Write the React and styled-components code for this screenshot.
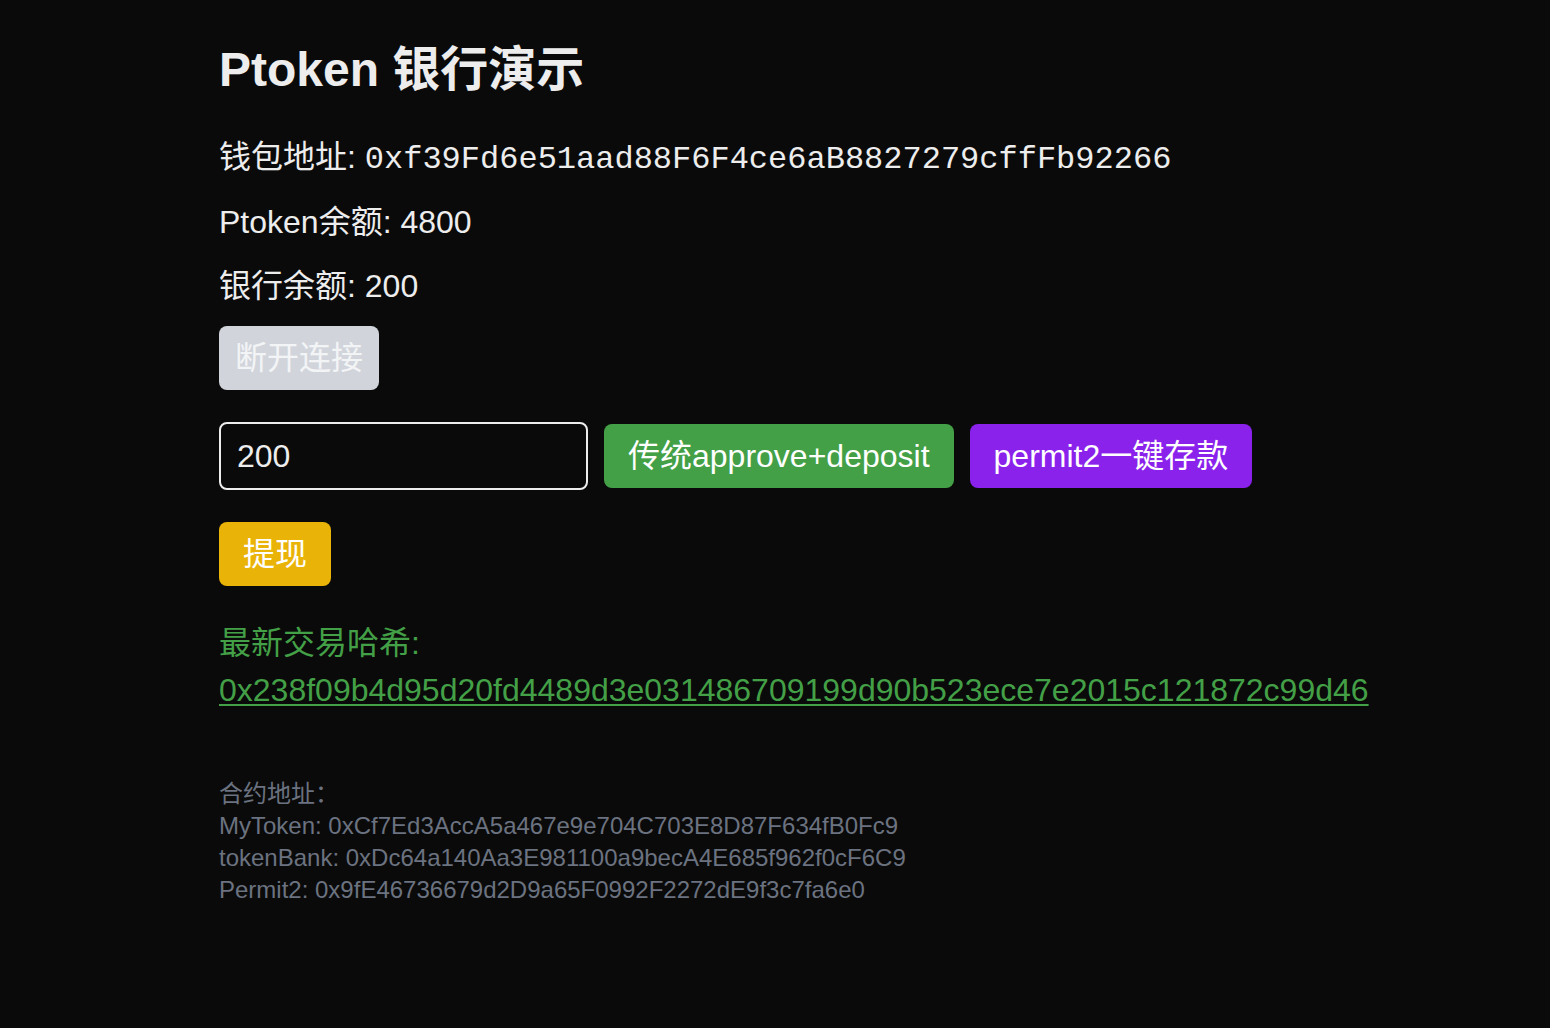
import React, { useState } from 'react';
import styled, { createGlobalStyle } from 'styled-components';

const GlobalStyle = createGlobalStyle`
  html, body {
    margin: 0;
    padding: 0;
    background: #0a0a0a;
    color: #ededed;
    font-family: "Liberation Sans", Arial, "Noto Sans CJK SC", sans-serif;
  }
`;

const Page = styled.main`
  min-height: 1028px;
  padding: 42px 219px 0;
  box-sizing: border-box;
  display: flex;
  flex-direction: column;
  align-items: flex-start;
`;

const Title = styled.h1`
  margin: 0 0 35px;
  font-size: 48px;
  line-height: 56px;
  font-weight: 700;
  color: #ededed;
`;

const InfoLine = styled.p`
  margin: 0 0 ${({ $mb }) => ($mb ?? 16)}px;
  font-size: 32px;
  line-height: 48px;
`;

const Mono = styled.span`
  font-family: "Liberation Mono", "Courier New", monospace;
`;

const Button = styled.button`
  font-family: "Liberation Sans", Arial, "Noto Sans CJK SC", sans-serif;
  font-size: 32px;
  line-height: 32px;
  height: 64px;
  padding: 0 ${({ $px }) => $px || 24}px;
  border: none;
  border-radius: 8px;
  color: ${({ $fg }) => $fg || '#ffffff'};
  background: ${({ $bg }) => $bg};
  cursor: pointer;
  white-space: nowrap;

  &:disabled {
    cursor: not-allowed;
  }
`;

const Row = styled.div`
  display: flex;
  align-items: center;
  gap: 16px;
  margin-top: 32px;
`;

const AmountInput = styled.input`
  box-sizing: border-box;
  width: 369px;
  height: 68px;
  padding: 0 16px;
  border: 2px solid #ededed;
  border-radius: 8px;
  background: #0a0a0a;
  color: #ededed;
  font-family: "Liberation Sans", Arial, sans-serif;
  font-size: 32px;
  outline: none;
`;

const WithdrawWrap = styled.div`
  margin-top: 32px;
`;

const HashBlock = styled.div`
  margin-top: 33px;
  font-size: 32px;
  line-height: 48px;
  color: #43a047;
`;

const HashLink = styled.a`
  display: block;
  margin-top: -1px;
  color: #43a047;
  text-decoration: underline;
  text-underline-offset: 3px;
  text-decoration-thickness: 2px;
`;

const Contracts = styled.div`
  margin-top: 64px;
  font-size: 24px;
  line-height: 32px;
  color: #6b7280;
`;

export default function App() {
  const [amount, setAmount] = useState('200');

  return (
    <>
      <GlobalStyle />
      <Page>
        <Title>Ptoken 银行演示</Title>
        <InfoLine $mb={14}>
          钱包地址: <Mono>0xf39Fd6e51aad88F6F4ce6aB8827279cffFb92266</Mono>
        </InfoLine>
        <InfoLine>Ptoken余额: 4800</InfoLine>
        <InfoLine>银行余额: 200</InfoLine>
        <Button $bg="#d1d5db" $fg="#f3f4f6" $px={16} disabled>
          断开连接
        </Button>

        <Row>
          <AmountInput value={amount} onChange={(e) => setAmount(e.target.value)} />
          <Button $bg="#43a047">传统approve+deposit</Button>
          <Button $bg="#8a22ec">permit2一键存款</Button>
        </Row>

        <WithdrawWrap>
          <Button $bg="#eab308">提现</Button>
        </WithdrawWrap>

        <HashBlock>
          最新交易哈希:
          <HashLink href="#">
            0x238f09b4d95d20fd4489d3e031486709199d90b523ece7e2015c121872c99d46
          </HashLink>
        </HashBlock>

        <Contracts>
          <div>合约地址：</div>
          <div>MyToken: 0xCf7Ed3AccA5a467e9e704C703E8D87F634fB0Fc9</div>
          <div>tokenBank: 0xDc64a140Aa3E981100a9becA4E685f962f0cF6C9</div>
          <div>Permit2: 0x9fE46736679d2D9a65F0992F2272dE9f3c7fa6e0</div>
        </Contracts>
      </Page>
    </>
  );
}
